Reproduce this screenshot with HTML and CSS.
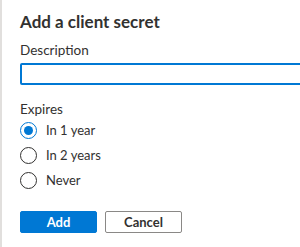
FILE: index.html
```html
<!DOCTYPE html>
<html lang="en">
<head>
  <meta charset="UTF-8">
  <title>Add a client secret</title>
  <meta name="viewport" content="width=device-width, initial-scale=1.0">
  <link rel="stylesheet" href="styles.css">
</head>
<body>

  <div class="panel">
    <h2>Add a client secret</h2>

    <form class="secret-form">
      <div class="form-field">
        <label for="description">Description</label>
        <input type="text" id="description" name="description">
      </div>

      <fieldset class="expires">
        <legend>Expires</legend>
        <label class="radio-row">
          <span class="radio checked"></span>
          In 1 year
        </label>
        <label class="radio-row">
          <span class="radio"></span>
          In 2 years
        </label>
        <label class="radio-row">
          <span class="radio"></span>
          Never
        </label>
      </fieldset>

      <div class="buttons">
        <button type="button" class="btn primary">Add</button>
        <button type="button" class="btn">Cancel</button>
      </div>
    </form>
  </div>

</body>
</html>
```
FILE: styles.css
```css
body {
  font-family: "Segoe UI", Lato, "Open Sans", sans-serif;
  background-color: #ffffff;
  color: #323130;
  margin: 0;
  padding: 0;
  overflow: hidden;
}
.panel {
  border-left: 2px solid #e1dfdd;
  padding: 10px 0 0 18px;
  height: 247px;
  box-sizing: border-box;
  overflow: hidden;
}
h2 {
  font-size: 17px;
  font-weight: 700;
  margin: 0 0 7px;
  line-height: 24px;
}
.form-field label {
  display: block;
  font-size: 13.5px;
  line-height: 18px;
  margin-bottom: 3px;
}
/* runs off the right edge like the real panel */
.form-field input {
  width: 320px;
  height: 22px;
  border: 2px solid #0078d4;
  border-radius: 2px;
  box-sizing: border-box;
  outline: none;
  margin: 0;
}
.expires {
  border: none;
  margin: 15px 0 0;
  padding: 0;
}
.expires legend {
  font-size: 13.5px;
  line-height: 18px;
  padding: 0;
}
.radio-row {
  display: flex;
  align-items: center;
  gap: 9px;
  font-size: 13px;
  height: 25px;
}
.radio {
  width: 17px;
  height: 17px;
  border: 1px solid #323130;
  border-radius: 50%;
  box-sizing: border-box;
  display: flex;
  align-items: center;
  justify-content: center;
}
.radio.checked {
  border-color: #0078d4;
}
.radio.checked::after {
  content: "";
  width: 9px;
  height: 9px;
  border-radius: 50%;
  background-color: #0078d4;
}
.buttons {
  display: flex;
  gap: 8px;
  margin-top: 18px;
}
.btn {
  font-family: inherit;
  font-size: 13px;
  font-weight: 700;
  width: 77px;
  height: 22px;
  padding: 0;
  border: 1px solid #8a8886;
  border-radius: 2px;
  background-color: #ffffff;
  color: #323130;
}
.btn.primary {
  background-color: #0078d4;
  border-color: #0078d4;
  color: #ffffff;
}
```
